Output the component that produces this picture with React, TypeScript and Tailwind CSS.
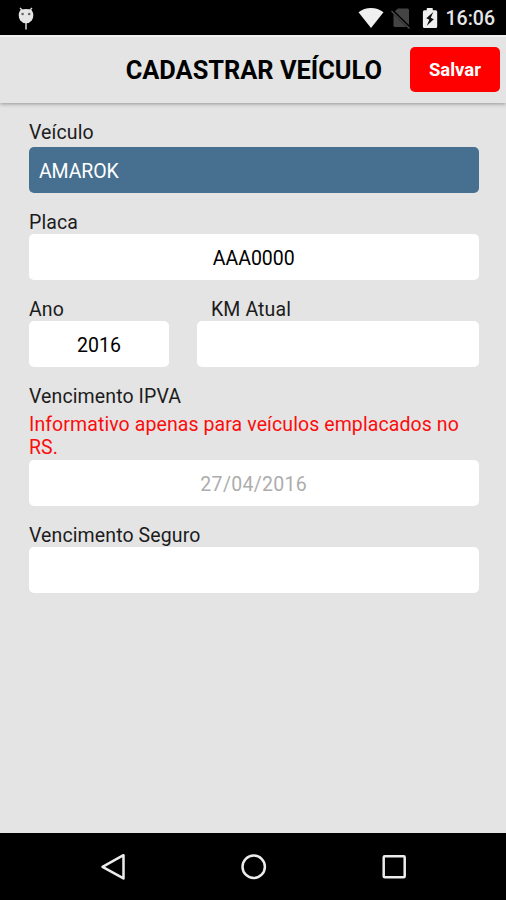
import type { ReactNode } from "react";

interface FieldProps {
  label: string;
  labelClass?: string;
  className?: string;
  children: ReactNode;
}

function Field({ label, labelClass = "", className = "", children }: FieldProps) {
  return (
    <div className={className}>
      <div
        className={`h-[23px] text-[19.5px] leading-[23px] tracking-[0.11px] text-[#1c1c1c] ${labelClass}`}
      >
        {label}
      </div>
      {children}
    </div>
  );
}

function ValueBox({ value = "", className = "" }: { value?: string; className?: string }) {
  return (
    <div
      className={`flex h-[46px] items-center justify-center rounded-[5px] bg-white pt-[2px] text-[19.5px] leading-[23px] ${className}`}
    >
      <span>{value}</span>
    </div>
  );
}

function StatusBar() {
  return (
    <div className="flex h-[35px] flex-none items-center justify-between bg-black">
      <svg className="ml-[17px]" width="18" height="35" viewBox="0 0 18 35">
        <path d="M3 8 5.5 10.5M15 8 12.5 10.5M9 22v7.5" stroke="#e6e6e6" strokeWidth="1.4" />
        <path
          d="M3.2 10.2Q9 7.8 14.8 10.2Q18 15.5 14.7 20.5Q12.5 23.3 9 23.3Q5.5 23.3 3.3 20.5Q0 15.5 3.2 10.2Z"
          fill="#e6e6e6"
        />
        <circle cx="5.6" cy="14" r="1.3" fill="#666" />
        <circle cx="12.2" cy="14" r="1.3" fill="#666" />
      </svg>

      <div className="flex items-center">
        <svg width="90" height="35" viewBox="0 0 90 35">
          {/* wifi */}
          <path d="M7.5 12.3C14.5 6.6 25.5 6.6 32.5 12.3L20 28Z" fill="#f0f0f0" />
          {/* no sim */}
          <path d="M47 8.5h9.5q1.5 0 1.5 1.5v15.5L43.5 11.5Z" fill="#444" />
          <path d="M42.5 14v11.5q0 1.5 1.5 1.5h11.5Z" fill="#444" />
          <path d="M41 10.5 59 28" stroke="#000" strokeWidth="3" />
          <path d="M40.5 11 58.5 28.5" stroke="#4c4c4c" strokeWidth="1.4" />
          {/* battery */}
          <path
            d="M76.5 8h4.5q.8 0 .8.8v1.4h2.900q1.500 0 1.500 1.500V26.500q0 1.500-1.500 1.500H73.400q-1.500 0-1.500-1.500V11.700q0-1.500 1.500-1.500h2.300V8.800q0-.8.8-.8Z"
            fill="#f0f0f0"
          />
          <path d="M82.3 12 75.3 18.2 78.3 19.8 75.8 25.8 82.8 19.2 79.8 17.7Z" fill="#111" />
        </svg>
        <span className="ml-[5px] mr-[11px] mt-[3px] text-[19.5px] font-medium leading-6 text-[#e6e6e6]">
          16:06
        </span>
      </div>
    </div>
  );
}

function Header() {
  return (
    <header className="flex h-[68px] flex-none items-center justify-end border-t-2 border-[#f1f1f1] bg-[#e4e4e4] pb-[2px] pr-[6px] shadow-[0_1px_4px_rgba(0,0,0,0.35)]">
      <h1 className="mr-[28px] mt-[3px] text-[25.4px] font-bold text-black">CADASTRAR VEÍCULO</h1>
      <button className="h-[45px] w-[90px] rounded-[5px] bg-[#fe0000] pt-[3px] text-[18.5px] font-bold text-white">
        Salvar
      </button>
    </header>
  );
}

function NavBar() {
  return (
    <nav className="h-[67px] flex-none bg-black">
      <svg width="506" height="67" viewBox="0 0 506 67" fill="none" stroke="#ececec" strokeWidth="2.5">
        <path d="M123.5 22.2v23.2L102.5 33.8Z" strokeLinejoin="round" />
        <circle cx="253.7" cy="33.8" r="11.2" />
        <rect x="383.7" y="23.2" width="21" height="21" rx="1" />
      </svg>
    </nav>
  );
}

export default function App() {
  return (
    <div className="flex h-[900px] w-[506px] flex-col overflow-hidden bg-[#e4e4e4] font-['Roboto',sans-serif] text-black">
      <StatusBar />
      <Header />
      <main className="flex flex-1 flex-col gap-[18px] pl-[29px] pr-[27.5px] pt-[18px]">
        <Field label="Veículo">
          <div className="mt-[3px] flex h-[46px] items-center rounded-[5px] bg-[#466f90] pl-[10px] pt-[3px] text-[19.5px] leading-[23px] tracking-[-0.1px] text-white">
            AMAROK
          </div>
        </Field>
        <Field label="Placa">
          <ValueBox value="AAA0000" />
        </Field>
        <div className="flex gap-[28px]">
          <Field label="Ano" className="w-[140px]">
            <ValueBox value="2016" />
          </Field>
          <Field label="KM Atual" labelClass="pl-[14px]" className="flex-1">
            <ValueBox />
          </Field>
        </div>
        <Field label="Vencimento IPVA">
          <p className="mb-[1px] mt-[5px] text-[19.5px] leading-[23px] tracking-[0.09px] text-[#fb0d0d]">
            Informativo apenas para veículos emplacados no RS.
          </p>
          <ValueBox value="27/04/2016" className="tracking-[0.3px] text-[#adadad]" />
        </Field>
        <Field label="Vencimento Seguro">
          <ValueBox />
        </Field>
      </main>
      <NavBar />
    </div>
  );
}
